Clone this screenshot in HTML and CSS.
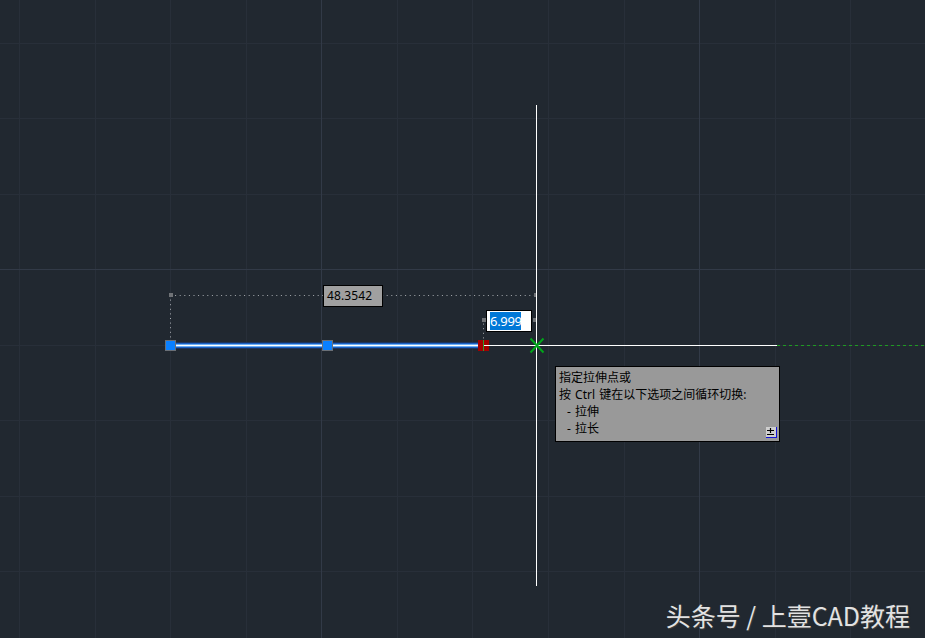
FILE: index.html
```html
<!DOCTYPE html>
<html lang="zh">
<head>
<meta charset="utf-8" />
<title>拉伸</title>
<link rel="stylesheet" href="styles.css">
</head>
<body>
<div class="canvas">
	<svg class="drawing" width="925" height="638" viewBox="0 0 925 638">
		<g class="grid-minor">
			<path d="M19.5 0V638M95.5 0V638M170.5 0V638M246.5 0V638M397.5 0V638M472.5 0V638M548.5 0V638M624.5 0V638M775.5 0V638M850.5 0V638" />
			<path d="M0 43.5H925M0 118.5H925M0 194.5H925M0 345.5H925M0 420.5H925M0 496.5H925M0 571.5H925" />
		</g>
		<g class="grid-major">
			<path d="M321.5 0V638M699.5 0V638M0 269.5H925" />
		</g>

		<g class="dim-dots">
			<path d="M170.5 295.5H536M170.5 295V340M483.5 319V340M483 319.5H536" />
		</g>
		<g class="dim-ends">
			<rect x="169" y="293" width="4" height="4" />
			<rect x="534" y="293" width="3" height="4" />
			<rect x="482" y="318" width="4" height="4" />
			<rect x="533" y="318" width="3" height="4" />
		</g>

		<path class="rubber" d="M777 345.5H925" />

		<rect class="line-glow" x="170" y="342" width="314" height="7" />
		<rect class="line-blue" x="170" y="343" width="314" height="5" />
		<rect class="line-inner" x="170" y="344" width="314" height="3" />
		<rect class="line-core" x="170" y="345" width="308" height="1" />

		<rect class="grip" x="165.5" y="340.5" width="10" height="10" />
		<rect class="grip" x="322.5" y="340.5" width="10" height="10" />
		<rect class="grip-hot" x="478" y="340" width="11" height="11" />
		<path class="grip-cross" d="M483.5 340V351" />

		<path class="cursor" d="M536.5 105V586M484 345.5H777" />
		<path class="snap" d="M530.5 338.5L543.5 352.5M543.5 338.5L530.5 352.5" />
	</svg>

	<div class="dim-label">48.3542</div>
	<div class="dim-input"><span class="dim-selected">6.999</span></div>

	<div class="tooltip">
		<div>指定拉伸点或</div>
		<div>按 Ctrl 键在以下选项之间循环切换:</div>
		<div class="opt">- 拉伸</div>
		<div class="opt">- 拉长</div>
		<span class="more"><svg width="9" height="9" viewBox="0 0 9 9"><path d="M1 3.5H8M4.5 1V6M1 7.5H8" /></svg></span>
	</div>

	<div class="watermark">头条号 / 上壹CAD教程</div>
</div>
</body>
</html>
```

FILE: styles.css
```css
body {
	margin: 0;
	background-color: #212830;
	overflow: hidden;
}
.canvas {
	position: relative;
	width: 925px;
	height: 638px;
	overflow: hidden;
	font-family: "Noto Sans", "Noto Sans CJK SC", sans-serif;
}
.drawing {
	position: absolute;
	left: 0;
	top: 0;
}
.drawing path {
	fill: none;
}
.grid-minor path {
	stroke: #282f39;
	stroke-width: 1;
}
.grid-major path {
	stroke: #323a47;
	stroke-width: 1;
}
.dim-dots path {
	stroke: #a8acb0;
	stroke-width: 1;
	stroke-dasharray: 1 3.6;
}
.dim-ends rect {
	fill: #6f7276;
}
.rubber {
	stroke: #1f9a22;
	stroke-width: 1;
	stroke-dasharray: 3 3;
}
.line-glow {
	fill: #1c3560;
}
.line-blue {
	fill: #1a5fc0;
}
.line-inner {
	fill: #6fb0f5;
}
.line-core {
	fill: #ffffff;
}
.grip {
	fill: #0a80ff;
	stroke: #6a6f76;
	stroke-width: 1;
}
.grip-hot {
	fill: #a30000;
}
.grip-cross {
	stroke: #2f9a2f;
	stroke-width: 1;
}
.cursor {
	stroke: #ffffff;
	stroke-width: 1;
}
.snap {
	stroke: #00a51a;
	stroke-width: 2;
}
.dim-label {
	position: absolute;
	left: 323px;
	top: 285px;
	box-sizing: border-box;
	width: 60px;
	height: 22px;
	padding-left: 3px;
	border: 1px solid #000000;
	background-color: #a0a0a0;
	color: #000000;
	font-size: 12px;
	letter-spacing: 0.1px;
	line-height: 20px;
}
.dim-input {
	position: absolute;
	left: 486px;
	top: 310px;
	box-sizing: border-box;
	width: 46px;
	height: 22px;
	padding: 1px 3px;
	border: 1px solid #000000;
	background-color: #ffffff;
	font-size: 13px;
	line-height: 18px;
}
.dim-selected {
	display: block;
	width: 31px;
	height: 18px;
	background-color: #0078d7;
	color: #ffffff;
	letter-spacing: -0.3px;
}
.tooltip {
	position: absolute;
	left: 555px;
	top: 366px;
	box-sizing: border-box;
	width: 225px;
	height: 76px;
	padding: 2px 3px;
	border: 1px solid #000000;
	background-color: #999999;
	color: #000000;
	font-size: 12px;
	line-height: 17px;
	word-spacing: 1px;
}
.opt {
	padding-left: 8px;
}
.more {
	position: absolute;
	right: 2px;
	bottom: 3px;
	box-sizing: border-box;
	display: flex;
	width: 11px;
	height: 11px;
	background-color: #cfcfcf;
	border-right: 1px solid #1414d8;
	border-bottom: 1px solid #1414d8;
}
.more path {
	fill: none;
	stroke: #000000;
	stroke-width: 1.2;
}
.watermark {
	position: absolute;
	right: 15px;
	top: 597px;
	color: #e2e2e2;
	font-family: "Noto Sans CJK SC", "Noto Sans", sans-serif;
	font-size: 25px;
	line-height: 36px;
	text-shadow: 1px 1px 1px #3c3c3c;
	white-space: nowrap;
}
```
